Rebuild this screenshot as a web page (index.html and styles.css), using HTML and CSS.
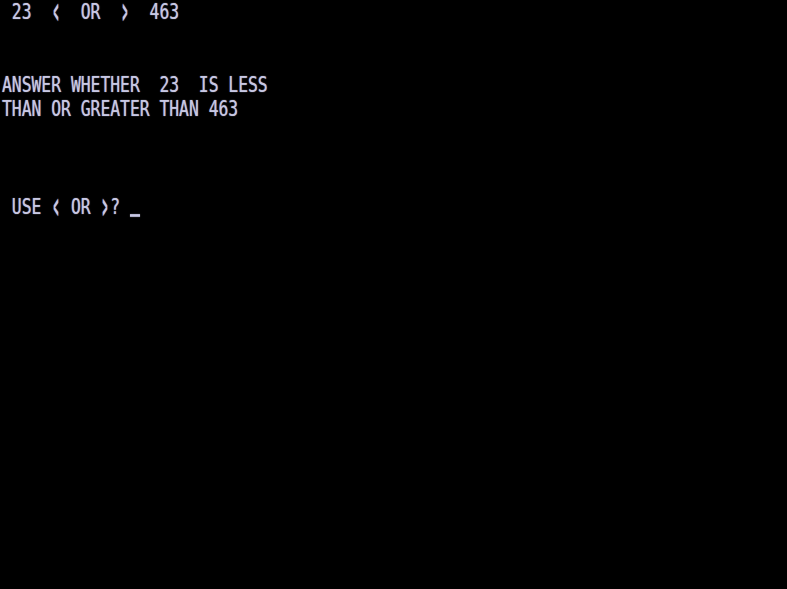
FILE: index.html
```html
<!DOCTYPE html>
<html>
<head>
<meta charset="utf-8">
<link rel="stylesheet" href="styles.css">
</head>
<body>
<div class="screen">
<div class="line"> 23  <span class="ang">&lt;</span>  OR  <span class="ang">&gt;</span>  463</div>
<div class="line"> </div>
<div class="line"> </div>
<div class="line">ANSWER WHETHER  23  IS LESS</div>
<div class="line">THAN OR GREATER THAN 463</div>
<div class="line"> </div>
<div class="line"> </div>
<div class="line"> </div>
<div class="line"> USE <span class="ang">&lt;</span> OR <span class="ang">&gt;</span>? <span class="cursor"></span></div>
</div>
</body>
</html>
```
FILE: styles.css
```css
html, body {
  margin: 0;
  padding: 0;
  background: #000;
  width: 787px;
  height: 589px;
  overflow: hidden;
}
.screen {
  padding-left: 2px;
  transform: scaleY(1.26);
  transform-origin: 0 0;
  font-family: "DejaVu Sans Mono", monospace;
  font-size: 16.35px;
  color: #c8c8e4;
  text-shadow: 0 0 1px rgba(200, 200, 228, 0.8);
}
.line {
  white-space: pre;
  line-height: 19.37px;
  height: 19.37px;
}
.ang {
  display: inline-block;
  transform: scale(0.5, 1.6);
  transform-origin: 50% 9.4px;
  font-weight: bold;
}
.cursor {
  display: inline-block;
  width: 10px;
  height: 2.6px;
  background: #c8c8e4;
  box-shadow: 0 0 1px rgba(200, 200, 228, 0.8);
  vertical-align: -2.4px;
}
```
